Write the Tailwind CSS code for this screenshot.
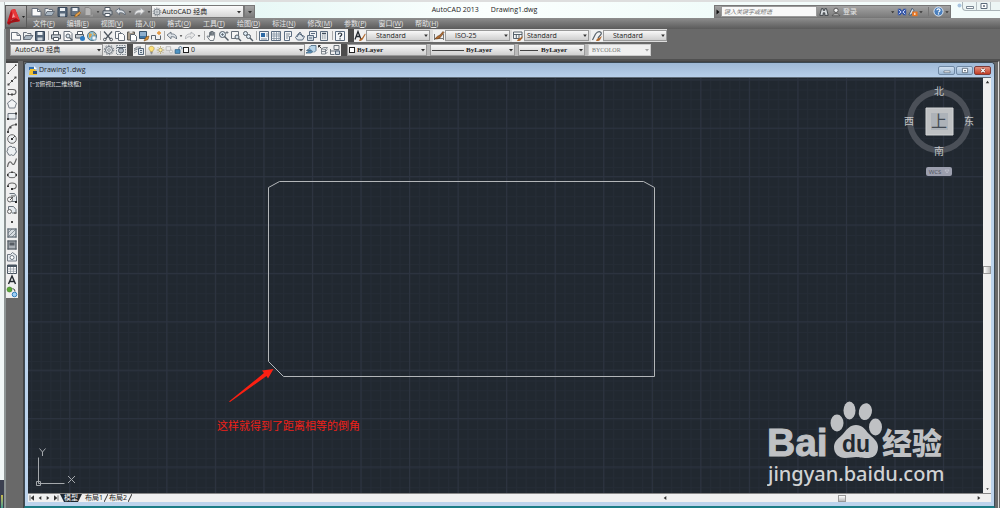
<!DOCTYPE html>
<html lang="zh-CN">
<head>
<meta charset="utf-8">
<title>AutoCAD 2013 Drawing1.dwg</title>
<script src="https://cdn.jsdelivr.net/npm/@tailwindcss/browser@4"></script>
</head>
<body class="min-h-screen flex flex-col overflow-hidden bg-[#696969] font-['Open_Sans','Noto_Sans_CJK_SC',sans-serif] text-[7px] leading-[10px] text-[#222]">

<!-- icon library, 12 x 12 grid -->
<svg class="hidden" aria-hidden="true">
  <g fill="none" stroke="#5d6670" stroke-width="1">
  <symbol id="new" viewBox="0 0 12 12"><path d="M1.500 2.500h5.500l3.500 3v4.500h-9z" fill="#fafafa" stroke="#68717c"/><path d="M7 2.500v3h3.500" fill="none" stroke="#68717c"/></symbol>
  <symbol id="open" viewBox="0 0 12 12"><path d="M1.500 9.500v-7h3l1 1h3.500v2" fill="#edf0f2" stroke="#68717c"/><path d="M1.500 9.500l2-4h7.500l-2.500 4z" fill="#a9b6c2" stroke="#68717c"/></symbol>
  <symbol id="save" viewBox="0 0 12 12"><path d="M1.500 1.500h9v9h-9z" fill="#566779" stroke="#39485a"/><path d="M3.500 2h5v3h-5z" fill="#eef2f5"/><path d="M3.500 7.500h5v3h-5z" fill="#cbd3da"/></symbol>
  <symbol id="saveas" viewBox="0 0 12 12"><path d="M1.500 1.500h8v8h-8z" fill="#6a7785" stroke="#465564"/><path d="M3 2h5v3h-5z" fill="#eef2f5"/><path d="M5 11l1-2.500 4-3 1.300 1.500-4 3.500z" fill="#e8a24a" stroke="#8a5a20" stroke-width=".6"/></symbol>
  <symbol id="cloud" viewBox="0 0 12 12"><path d="M2.500 1.500h4l2 2v6h-6z" fill="#b7b7b7" stroke="#888"/><path d="M7 10l3.500-2v2.500h-3.500z" fill="#999"/></symbol>
  <symbol id="print" viewBox="0 0 12 12"><path d="M3.500 5v-3.500h5v3.500" fill="#fff" stroke="#4f5862"/><path d="M1.500 4.800h9v4h-9z" fill="#c3c9cf" stroke="#4f5862"/><path d="M3.500 7.500h5v3h-5z" fill="#fff" stroke="#4f5862"/></symbol>
  <symbol id="preview" viewBox="0 0 12 12"><path d="M2 1.500h6l2 2v7h-8z" fill="#fafafa" stroke="#68717c"/><circle cx="6" cy="6" r="2" fill="#dde8f0" stroke="#56606a"/><path d="M7.500 7.500l3 3" stroke="#56606a" stroke-width="1.400"/></symbol>
  <symbol id="publish" viewBox="0 0 12 12"><path d="M3.500 4v-2.500h5v3" fill="#fff" stroke="#4f5862"/><path d="M1.500 4.500h8v3.500h-8z" fill="#c3c9cf" stroke="#4f5862"/><circle cx="8.500" cy="8.500" r="2.500" fill="#2c7cc4"/></symbol>
  <symbol id="globe" viewBox="0 0 12 12"><circle cx="6" cy="6" r="4.500" fill="#8ec6dd" stroke="#56717f"/><path d="M3 3l3 1-1 3-2 1zM7 2l3 3-2 1z" fill="#d9a04c"/><path d="M6 6h4v4h-4z" fill="#f4f7f9" stroke="#4a84a8" stroke-width=".7"/></symbol>
  <symbol id="cut" viewBox="0 0 12 12"><path d="M2 1.500l6.500 7.500M10 1.500l-6.500 7.500" stroke="#4c545d" stroke-width="1.200"/><circle cx="2.800" cy="9.500" r="1.300" fill="none" stroke="#4c545d"/><circle cx="9.200" cy="9.500" r="1.300" fill="none" stroke="#4c545d"/></symbol>
  <symbol id="copy" viewBox="0 0 12 12"><path d="M1.500 1.500h4l2 2v5h-6z" fill="#fafafa" stroke="#68717c"/><path d="M4.500 3.500h4l2 2v5h-6z" fill="#fafafa" stroke="#68717c"/></symbol>
  <symbol id="paste" viewBox="0 0 12 12"><path d="M1.500 2h7v8h-7z" fill="#a69a8a" stroke="#5c5953"/><path d="M3.500 1h3v2h-3z" fill="#ddd"/><path d="M4.500 4.500h4l2 2v4.500h-6z" fill="#fff" stroke="#5c656e"/></symbol>
  <symbol id="match" viewBox="0 0 12 12"><path d="M1.500 1.500h7v7h-7z" fill="#3d73a5" stroke="#39536c"/><path d="M2 3h6M2 5h6" stroke="#dce9f5"/><path d="M6 11l2-4 3-1-1 3.500z" fill="#d7933b" stroke="#7b4a14" stroke-width=".6"/></symbol>
  <symbol id="block" viewBox="0 0 12 12"><path d="M1.500 9.500v-4h4v4h5v-4" fill="none" stroke="#5a636d"/><path d="M9 1v4M7 3h4" stroke="#e29338" stroke-width="1.300"/></symbol>
  <symbol id="undo" viewBox="0 0 12 12"><path d="M1 5l4-3v2c4-.5 6 2 5.500 5-1.500-2-3-2.500-5.500-2.200v2z" fill="#dce1e6" stroke="#596572" stroke-width=".8"/></symbol>
  <symbol id="redo" viewBox="0 0 12 12"><path d="M11 5l-4-3v2c-4-.5-6 2-5.500 5 1.500-2 3-2.500 5.500-2.200v2z" fill="#e8e8e8" stroke="#a9adb2" stroke-width=".8"/></symbol>
  <symbol id="down" viewBox="0 0 6 12"><path d="M1 5h4l-2 2.500z" fill="#333"/></symbol>
  <symbol id="pan" viewBox="0 0 12 12"><path d="M4 10.500l-3-4 1-.7 1.500 1.200v-4.500h1.200v3v-4h1.200v4v-4h1.200v4l.4-3h1.200l-.2 5-1 3z" fill="#f6f6f6" stroke="#535d67" stroke-width=".8"/></symbol>
  <symbol id="zoomrt" viewBox="0 0 12 12"><circle cx="4.500" cy="4.500" r="3" fill="#dde9f2" stroke="#535d67"/><path d="M6.500 6.500l4 4" stroke="#535d67" stroke-width="1.500"/><path d="M3 4.500h3M4.500 3v3M9 1v3M7.500 2.500h3" stroke="#535d67" stroke-width=".7"/></symbol>
  <symbol id="zoomwin" viewBox="0 0 12 12"><path d="M1.500 1.500h7v7h-7z" stroke="#68717c" fill="#f5f5f5"/><circle cx="7" cy="7" r="2" fill="#dde9f2" stroke="#535d67"/><path d="M8.500 8.500l2.500 2.500" stroke="#535d67" stroke-width="1.400"/></symbol>
  <symbol id="zoomprev" viewBox="0 0 12 12"><circle cx="3.500" cy="3.500" r="2" fill="#dde9f2" stroke="#535d67"/><circle cx="6.500" cy="6.500" r="2" fill="#dde9f2" stroke="#535d67"/><path d="M8 8l3 3" stroke="#535d67" stroke-width="1.400"/></symbol>
  <symbol id="props" viewBox="0 0 12 12"><path d="M1.500 1.500h9v9h-9z" fill="#f3f6f9" stroke="#5b6c80"/><path d="M3 3h4v4h-4z" fill="#2d6aa5"/><path d="M3 9h6M8 4h2M8 6h2" stroke="#7c8894"/></symbol>
  <symbol id="grid" viewBox="0 0 12 12"><path d="M1.500 1.500h9v9h-9z" fill="#f3f6f9" stroke="#5b6c80"/><path d="M1.500 4h9M1.500 6h9M1.500 8.500h9M4 2v8M6.500 2v8M9 2v8" stroke="#8090a0" stroke-width=".8"/></symbol>
  <symbol id="palette" viewBox="0 0 12 12"><path d="M2.500 1.500h7v5h-2v4h-5z" fill="#f1f3f5" stroke="#5b6c80"/><path d="M4 4h4M4 6h3M4 8h2" stroke="#7e8a96"/></symbol>
  <symbol id="sheet" viewBox="0 0 12 12"><path d="M1.500 7.500l3-4 6 3-2 3.500h-5z" fill="#dfe5ea" stroke="#5b6c80"/><path d="M3 7l3-5 3 5" stroke="#5b6c80" fill="none"/></symbol>
  <symbol id="markup" viewBox="0 0 12 12"><path d="M3.500 1.500h7v6h-7z" fill="#f1f3f5" stroke="#5b6c80"/><path d="M1.500 5.500h6v5h-6z" fill="#cfd8df" stroke="#5b6c80"/><path d="M3 8h3M5 3.500h4" stroke="#5b6c80"/></symbol>
  <symbol id="calc" viewBox="0 0 12 12"><path d="M2.500 1.500h7v9h-7z" fill="#e8ecef" stroke="#5b6c80"/><path d="M4 3.500h4" stroke="#3d4c5c" stroke-width="1.400"/><path d="M4 6h4M4 8h4" stroke="#7e8a96" stroke-dasharray="1 .7"/></symbol>
  <symbol id="help" viewBox="0 0 12 12"><path d="M1.500 1.500h9v9h-9z" fill="#f3f6f9" stroke="#5b6c80"/><path d="M4.300 4.500c0-2 3.400-2 3.400 0 0 1.300-1.700 1.200-1.700 2.700M6 8.300v1.200" stroke="#2a333d" stroke-width="1.200" fill="none"/></symbol>
  <symbol id="gear" viewBox="0 0 12 12"><circle cx="6" cy="6" r="3.500" fill="#e3e6e9" stroke="#68717a"/><circle cx="6" cy="6" r="1.300" fill="#fff" stroke="#68717a" stroke-width=".8"/><circle cx="6" cy="6" r="4.700" fill="none" stroke="#68717a" stroke-width="1" stroke-dasharray="1.400 1.550"/></symbol>
  <symbol id="gearset" viewBox="0 0 12 12"><path d="M1.500 1.500h9v9h-9z" fill="#e6eaed" stroke="#7c868f" stroke-dasharray="1.500 1"/><circle cx="6" cy="6.500" r="2.500" fill="#aeb8c2" stroke="#56606b"/><path d="M2 3.500h8" stroke="#56606b"/></symbol>
  <symbol id="layers" viewBox="0 0 12 12"><path d="M1 5l3-2h4l-3 2zM1 7l3-2M1 9l3-2" fill="#eef1f4" stroke="#68717a" stroke-width=".8"/><path d="M5.500 4.500h5v6h-5z" fill="#dce3e9" stroke="#56677a"/><path d="M7 6.500h2M7 8.500h2" stroke="#56677a"/></symbol>
  <symbol id="bulb" viewBox="0 0 12 12"><path d="M4.500 8c0-1.500-2-2-2-4 0-4 7-4 7 0 0 2-2 2.500-2 4z" fill="#ffe27a" stroke="#a38a3b" stroke-width=".8"/><path d="M4.500 9.500h3M5 11h2" stroke="#666"/></symbol>
  <symbol id="sun" viewBox="0 0 12 12"><circle cx="6" cy="6" r="2.400" fill="#fff0a5" stroke="#927c38" stroke-width=".8"/><path d="M6 1v1.500M6 9.500v1.500M1 6h1.500M9.500 6h1.500M2.500 2.500l1 1M8.500 8.500l1 1M9.500 2.500l-1 1M3.500 8.500l-1 1" stroke="#a18a3a" stroke-width="1"/></symbol>
  <symbol id="vpf" viewBox="0 0 12 12"><path d="M1.500 1.500h6v5h-6z" fill="#ececec" stroke="#b0b0b0"/><circle cx="8" cy="8" r="2" fill="#eee" stroke="#b0b0b0"/></symbol>
  <symbol id="lock" viewBox="0 0 12 12"><path d="M6.500 5.500v-2c0-2.800 4-2.800 4 0v1.500" stroke="#426a8b" stroke-width="1.200" fill="none"/><path d="M1.500 5.500h6.500v5h-6.500z" fill="#4d95c5" stroke="#2c5c80"/></symbol>
  <symbol id="layprev" viewBox="0 0 12 12"><path d="M1 9l3-2h5l-3 2zM1.500 6.500l3-2h5l-3 2z" fill="#63a1cf" stroke="#42627b" stroke-width=".8"/><path d="M4 3.500l2-2h5v5l-2 2" fill="#b8d5e9" stroke="#42627b" stroke-width=".8"/></symbol>
  <symbol id="laystate" viewBox="0 0 12 12"><path d="M1.500 1.500l3 3M1.500 1.500h2M1.500 1.500v2" fill="none" stroke="#333"/><path d="M4.500 5l2-1.500h4l-1.500 2zM4.500 7.500h4l2-2M4.500 10h4l2-2M4.500 5v5M8.500 5.500v4.500" fill="#e6eaed" stroke="#68717a" stroke-width=".8"/></symbol>
  <symbol id="dots" viewBox="0 0 12 12"><path d="M5 1.500h5v4h-5z" fill="#eee" stroke="#68717a"/><path d="M1.500 7h9M1.500 5v5.500h4" fill="none" stroke="#68717a"/><path d="M6.500 7h4v3.500h-4z" fill="#ccd5dd" stroke="#56677a"/></symbol>
  <symbol id="textstyle" viewBox="0 0 12 12"><path d="M1 9.500l3-8 3 8M2 6.500h4" stroke="#23282e" stroke-width="1.300" fill="none"/><path d="M5 11c1-3 2-3 3-3l3-4.500.7.700-2.700 4.800c-1 1.500-2 2-4 2z" fill="#b06a30"/></symbol>
  <symbol id="dimstyle" viewBox="0 0 12 12"><path d="M1.500 4v6M1 8.500h10M10.500 4v6" stroke="#777" fill="none"/><path d="M2 9c2-3 3-3 5-4l3-3.500 1 1-3 4c-1 2-3 2.500-6 2.500z" fill="#b06a30" stroke="#5f3c1f" stroke-width=".6"/></symbol>
  <symbol id="tablestyle" viewBox="0 0 12 12"><path d="M1.500 2h8.500v6.500h-8.500zM1.500 4.500h8.500M4.300 4.500v4M7 4.500v4" fill="#f5f7f8" stroke="#47535f" stroke-width=".9"/><path d="M5 11c1-2.500 2-2.500 3-3l3-2-2 4c-1 1-2 1.300-4 1z" fill="#b06a30"/></symbol>
  <symbol id="leader" viewBox="0 0 12 12"><path d="M1.500 10l3-6c3-4 7-2 5.500.5l-3 3.500" stroke="#58626c" fill="none" stroke-width="1.200"/><path d="M5 11c1-3 2-3 3-3l3-2-2 4c-1 1-2 1.300-4 1z" fill="#b06a30"/></symbol>
  <symbol id="line" viewBox="0 0 12 12"><path d="M2.500 9.500l7-7" stroke="#777" fill="none"/><path d="M1.500 9.500h1.500v1.500h-1.500zM9 1.500h1.500v1.500h-1.500z" fill="#333"/></symbol>
  <symbol id="xline" viewBox="0 0 12 12"><path d="M2 10l8-8" stroke="#777" fill="none"/><path d="M1.500 8.500h2v2h-2zM5 5h2v2h-2zM8.500 1.500h2v2h-2z" fill="#444"/></symbol>
  <symbol id="pline" viewBox="0 0 12 12"><path d="M2 3.500h5c4 0 4 5 0 5h-5" stroke="#666" fill="none" stroke-width="1.200"/><path d="M1 8l2-1.500v3zM5 7.500h2v2h-2z" fill="#444"/></symbol>
  <symbol id="polygon" viewBox="0 0 12 12"><path d="M6 1.500l4.500 3.500-1.700 5h-5.600l-1.700-5z" stroke="#777f88" fill="#f1f3f5"/></symbol>
  <symbol id="rect" viewBox="0 0 12 12"><path d="M2 3.500h8v5.500h-8z" stroke="#6b737c" fill="#e9edf0"/><path d="M1 8h2v2h-2zM9 2.500h2v2h-2z" fill="#333"/></symbol>
  <symbol id="arc" viewBox="0 0 12 12"><path d="M2 10c0-4 3-7 8-7.500" stroke="#666" fill="none" stroke-width="1.200"/><path d="M1 9h2v2h-2zM3.500 4.500h2v2h-2zM9 1.500h2v2h-2z" fill="#444"/></symbol>
  <symbol id="circle" viewBox="0 0 12 12"><circle cx="6" cy="6" r="4.300" fill="#edf0f2" stroke="#666"/><path d="M6 6l3-3" stroke="#555"/><path d="M5 5h2v2h-2z" fill="#333"/></symbol>
  <symbol id="revcloud" viewBox="0 0 12 12"><path d="M3 2c1-1 3-1 3.500.5 2-1 4 .5 3 2.500 1.500 1 1 3-.5 3.500 0 2-2.500 2.500-3.500 1.200-1.500 1.300-4 .3-3.500-1.700-1.500-.7-1.300-2.700 0-3-.7-1-.2-2.500 1-3z" stroke="#69727b" fill="#edf0f2"/></symbol>
  <symbol id="spline" viewBox="0 0 12 12"><path d="M1.500 10c1-6 3-6 4.500-3.500s3 0 4.500-5" stroke="#666" fill="none" stroke-width="1.200"/></symbol>
  <symbol id="ellipse" viewBox="0 0 12 12"><ellipse cx="6" cy="6" rx="4.300" ry="2.700" fill="#edf0f2" stroke="#666"/><path d="M1 5h1.500v2h-1.500zM9.500 5h1.500v2h-1.500zM5.200 2.500h1.600v1.500h-1.600z" fill="#333"/></symbol>
  <symbol id="earc" viewBox="0 0 12 12"><path d="M2 6c0-4 8-4 8.300 0 0 2-2 3-4.300 3" stroke="#666" fill="none" stroke-width="1.100"/><path d="M1 5.500h2v1.500h-2zM5 8h2v2h-2z" fill="#333"/></symbol>
  <symbol id="insert" viewBox="0 0 12 12"><path d="M3.500 1.500h5l2 3v5h-5" stroke="#69727b" fill="#e4e9ed"/><circle cx="4" cy="7.500" r="2.500" fill="#f4f4f4" stroke="#666"/><path d="M9 9h2v2h-2z" fill="#222"/><path d="M5 4h4M4 8l3-3" stroke="#555"/></symbol>
  <symbol id="make" viewBox="0 0 12 12"><path d="M2.500 7v-4.500h5l2.500 3v3.500h-4" stroke="#69727b" fill="#e4e9ed"/><circle cx="3.500" cy="7.500" r="2" fill="#f4f4f4" stroke="#666"/><path d="M8 8h2.500v2h-2.500z" fill="#777"/></symbol>
  <symbol id="point" viewBox="0 0 12 12"><path d="M5 5h2v2h-2z" fill="#444"/></symbol>
  <symbol id="hatch" viewBox="0 0 12 12"><path d="M2 2h8v8h-8z" stroke="#69727b" fill="#d8dde1"/><path d="M2 6l4-4M2 10l8-8M6 10l4-4M1 2h10M1 10h10M2 1v10M10 1v10" stroke="#69727b" stroke-width=".7"/></symbol>
  <symbol id="gradient" viewBox="0 0 12 12"><path d="M2 2h8v8h-8z" stroke="#59626b" fill="#aab0b6"/><path d="M3.500 3.500h5v3h-5z" fill="#565d64"/><path d="M1 2h10M1 10h10M2 1v10M10 1v10" stroke="#59626b" stroke-width=".7"/></symbol>
  <symbol id="region" viewBox="0 0 12 12"><path d="M1.500 3.500h3l2-2 4 3v5.500h-9z" stroke="#707983" fill="#e4e9ed"/><circle cx="6" cy="6.500" r="2" fill="#fff" stroke="#707983"/></symbol>
  <symbol id="table" viewBox="0 0 12 12"><path d="M1.500 2h9v8.500h-9z" stroke="#47535f" fill="#fafafa"/><path d="M1.500 3h9" stroke="#47535f" stroke-width="2"/><path d="M1.500 6h9M1.500 8.300h9M4.500 4v6.500M7.500 4v6.500" stroke="#8a949e" stroke-width=".7"/></symbol>
  <symbol id="mtext" viewBox="0 0 12 12"><path d="M2.500 10l3.500-8 3.500 8M4 7.500h4" stroke="#23282e" stroke-width="1.400" fill="none"/></symbol>
  <symbol id="addsel" viewBox="0 0 12 12"><circle cx="3.500" cy="3.500" r="2.500" fill="#5aa838" stroke="#3c7a22" stroke-width=".6"/><circle cx="8.500" cy="8.500" r="2.300" fill="#9fd0f5" stroke="#2f7fc0"/><path d="M6.500 2.500l2 1 .5 2" stroke="#444" fill="none"/></symbol>
  <symbol id="binoc" viewBox="0 0 12 12"><path d="M3 2h2v2h2v-2h2l2 8h-4v-3h-2v3h-4z" fill="#d9dde0" stroke="#2f353b"/></symbol>
  <symbol id="user" viewBox="0 0 12 12"><circle cx="6" cy="4" r="2.600" fill="#f3f3f3" stroke="#444"/><path d="M1.500 10.500c0-3 9-3 9 0z" fill="#e4e4e4" stroke="#444"/></symbol>
  <symbol id="exchange" viewBox="0 0 12 12"><path d="M1 2h3l2 2.500 2-2.500h3v8h-3l-2-2.500-2 2.500h-3z" fill="#2d4fa3"/><path d="M2 3.500l3 2.500-3 2.500M10 3.500l-3 2.500 3 2.500" stroke="#cfdcff" fill="none" stroke-width="1.200"/></symbol>
  <symbol id="offline" viewBox="0 0 12 12"><path d="M1 9.500l4-8 2 2.500-3 5.500z" fill="#d5dde5" stroke="#37506e"/><path d="M5 5.500h6.500v5.500h-6.500z" fill="#e67522"/><path d="M8.200 7v2.500" stroke="#fff" stroke-width="1.300"/></symbol>
  <symbol id="about" viewBox="0 0 12 12"><circle cx="6" cy="6" r="5" fill="#4a7fbd" stroke="#e9f1fa"/><path d="M4.300 4.700c0-2.200 3.400-2.200 3.400 0 0 1.300-1.700 1.200-1.700 2.500M6 8v1.300" stroke="#fff" stroke-width="1.300" fill="none"/></symbol>
  <symbol id="min" viewBox="0 0 12 8"><path d="M2.500 4.500h7v2h-7z" fill="#fff" stroke="#5c6a7a" stroke-width=".8"/></symbol>
  <symbol id="max" viewBox="0 0 12 8"><path d="M3 1.500h6v5h-6z" fill="#fff" stroke="#5c6a7a"/><path d="M5 3.300h2v1.500h-2z" fill="#5c6a7a"/></symbol>
  <symbol id="close" viewBox="0 0 12 8"><path d="M4 2l4 4M8 2l-4 4" stroke="#5d2a24" stroke-width="2.600"/><path d="M4 2l4 4M8 2l-4 4" stroke="#fff" stroke-width="1.500"/></symbol>
  <symbol id="first" viewBox="0 0 12 12"><path d="M3 2v8" stroke="#333"/><path d="M9 2v8l-5-4z" fill="#333"/></symbol>
  <symbol id="prev" viewBox="0 0 12 12"><path d="M8 3v6l-4-3z" fill="#333"/></symbol>
  <symbol id="next" viewBox="0 0 12 12"><path d="M4 3v6l4-3z" fill="#333"/></symbol>
  <symbol id="last" viewBox="0 0 12 12"><path d="M9 2v8" stroke="#333"/><path d="M3 2v8l5-4z" fill="#333"/></symbol>
  <symbol id="up" viewBox="0 0 12 12"><path d="M3 8h6l-3-4z" fill="#333"/></symbol>
  </g>
</svg>

<header class="flex h-[29px] shrink-0 bg-[#f3fcfb] border-t-2 border-[#dedede]">
  <div class="w-[5px] shrink-0 bg-[#f0f7f6] border-r border-[#b5bcbc]"></div>
  <div class="flex flex-1 min-w-0 flex-col">
    <div class="flex h-4 items-end">
      <div class="relative w-[22px] h-4 shrink-0">
        <button aria-label="应用程序菜单" class="absolute left-0 top-[3px] z-10 w-[22px] h-[23px] border border-[#5a5a5a] bg-linear-to-b from-[#b8b8b8] to-[#6e6e6e]">
          <svg class="w-full h-full" viewBox="0 0 20 21"><path d="M1 17L5 4l4-1 5 12-4 1-1-3-4 1-1 4z" fill="#c8161d"/><path d="M5 4l4-1 5 12-4 1z" fill="#e8393a"/><path d="M1 17l9-5 4 3-9 2-2 2z" fill="#a01217"/><path d="M7 7l2 4-3 1z" fill="#f4a0a0"/><path d="M16 10h3l-1.500 2z" fill="#222"/></svg>
        </button>
      </div>
      <div class="flex h-[13px] w-[124px] shrink-0 items-center bg-linear-to-b from-[#a6a6a6] to-[#7c7c7c] border-t border-[#666] pl-[3px]" data-icons="new open save saveas cloud ~ print undo ~ redo ~" data-size="13"></div>
      <div class="relative flex h-[13px] w-[93px] shrink-0 items-center border border-[#777] bg-linear-to-b from-[#fbfbfb] to-[#d5d5d5]">
        <svg class="w-[10px] h-[10px] shrink-0"><use href="#gear"/></svg>
        <select aria-label="工作空间" class="appearance-none flex-1 min-w-0 h-[11px] text-[7px] leading-[10px]"><option>AutoCAD 经典</option></select>
        <svg class="absolute right-0 w-2 h-3 pointer-events-none"><use href="#down"/></svg>
      </div>
      <button aria-label="自定义快速访问工具栏" class="flex w-[11px] h-[13px] items-center justify-center bg-linear-to-b from-[#a6a6a6] to-[#7c7c7c] border border-[#777]"><svg class="w-2 h-3"><use href="#down"/></svg></button>
      <div class="flex flex-1 h-4 items-center justify-center gap-3 bg-linear-to-r from-[#e8f8f6] via-[#fbfffe] to-[#f1fcfa] min-w-0">
        <span class="whitespace-nowrap">AutoCAD 2013</span><h1 class="whitespace-nowrap">Drawing1.dwg</h1>
      </div>
      <div class="flex h-[13px] w-[237px] shrink-0 items-center bg-linear-to-b from-[#a3a3a3] to-[#7c7c7c] border border-[#777]">
        <button aria-label="展开搜索" class="w-[6px] h-[11px] flex shrink-0 items-center"><svg class="w-[6px] h-2" viewBox="0 0 6 8"><path d="M1.500 1.500v5l3-2.500z" fill="#111"/></svg></button>
        <input aria-label="搜索" placeholder="键入关键字或短语" class="w-24 shrink-0 h-[11px] px-[2px] bg-[#f8f8f8] border border-[#999] italic text-[6px] leading-[9px] placeholder:text-[#777]">
        <button aria-label="查找" class="w-[13px] shrink-0 flex justify-center"><svg class="w-[10px] h-[10px]"><use href="#binoc"/></svg></button>
        <button class="flex items-center gap-[2px] text-[#e6e6e6] w-[65px]"><svg class="w-[10px] h-[10px] ml-[1px]"><use href="#user"/></svg>登录</button>
        <svg class="w-[6px] h-[10px] mx-[1px]"><use href="#down"/></svg>
        <button aria-label="Exchange" class="px-[1px]"><svg class="w-[10px] h-[10px] block"><use href="#exchange"/></svg></button>
        <button aria-label="脱机" class="flex items-center"><svg class="w-[10px] h-[10px]"><use href="#offline"/></svg><svg class="w-[6px] h-[10px]"><use href="#down"/></svg></button>
        <span class="w-px h-[9px] bg-[#777] mx-1"></span>
        <button aria-label="帮助" class="flex items-center"><svg class="w-[11px] h-[11px]"><use href="#about"/></svg><svg class="w-[6px] h-[10px]"><use href="#down"/></svg></button>
      </div>
      <div class="flex w-[49px] shrink-0 h-4 items-start pl-[6px]">
        <svg class="w-[5px] h-[7px]" viewBox="0 0 5 7"><circle cx="2.500" cy="3.500" r="2" fill="#a8c4e0"/></svg>
        <div class="flex h-[9px] flex-1 border border-t-0 border-r-0 border-[#aab4b8] rounded-bl bg-[#edf5f5]">
          <button aria-label="最小化" class="w-[14px] border-r border-[#b5bec2]"><svg class="w-3 h-2 block mx-auto"><use href="#min"/></svg></button>
          <button aria-label="还原" class="w-[14px] border-r border-[#b5bec2]"><svg class="w-3 h-2 block mx-auto"><use href="#max"/></svg></button>
          <button aria-label="关闭" class="flex-1"></button>
        </div>
      </div>
    </div>
    <nav class="flex h-[11px] items-center gap-3 bg-linear-to-b from-[#8e8e8e] to-[#5b5b5b] pl-[28px] text-[#e6e6e6] leading-[11px] whitespace-nowrap">
      <a href="#">文件(<u>F</u>)</a><a href="#">编辑(<u>E</u>)</a><a href="#">视图(<u>V</u>)</a><a href="#">插入(<u>I</u>)</a><a href="#">格式(<u>O</u>)</a><a href="#">工具(<u>T</u>)</a><a href="#">绘图(<u>D</u>)</a><a href="#">标注(<u>N</u>)</a><a href="#">修改(<u>M</u>)</a><a href="#">参数(<u>P</u>)</a><a href="#">窗口(<u>W</u>)</a><a href="#">帮助(<u>H</u>)</a>
    </nav>
  </div>
</header>

<div class="flex flex-1 min-h-0">
  <div class="flex w-[6px] shrink-0 flex-col justify-end bg-[#f0f6f6] border-r-2 border-[#8d9494]">
    <div class="h-7 bg-[#3b4050] pt-[15px] px-[1px]"><div class="h-full bg-linear-to-b from-[#c7b84a] to-[#3a9c8c]"></div></div>
  </div>
  <main class="flex flex-1 min-w-0 flex-col">
    <!-- standard and styles toolbars -->
    <div class="flex h-[13px] items-center ml-1">
      <div class="flex h-[13px] shrink-0 items-center bg-[#f0f0f0] w-[338px]" data-icons="new open save | print preview publish globe | cut copy paste match block | undo ~ redo ~ | pan zoomrt zoomwin zoomprev | props grid palette sheet markup calc | help" data-size="12"></div>
      <span class="w-[6px] h-[13px] bg-[#4c4c4c]"></span>
      <div class="flex h-[13px] items-center bg-[#ddd]">
        <div data-icons="textstyle" data-size="12" class="flex bg-[#f0f0f0]"></div>
        <div class="relative w-16 h-[11px]"><select aria-label="文字样式" class="appearance-none block w-full h-[11px] pl-[9px] border border-[#999] bg-linear-to-b from-[#f8f8f8] to-[#cfcfcf] text-[7px] leading-[9px]"><option>Standard</option></select><svg class="absolute right-0 top-0 w-2 h-[11px] pointer-events-none"><use href="#down"/></svg></div>
        <span class="w-[3px]"></span>
        <div data-icons="dimstyle" data-size="12" class="flex bg-[#f0f0f0]"></div>
        <div class="relative w-[65px] h-[11px]"><select aria-label="标注样式" class="appearance-none block w-full h-[11px] pl-[9px] border border-[#999] bg-linear-to-b from-[#f8f8f8] to-[#cfcfcf] text-[7px] leading-[9px]"><option>ISO-25</option></select><svg class="absolute right-0 top-0 w-2 h-[11px] pointer-events-none"><use href="#down"/></svg></div>
        <span class="w-[2px]"></span>
        <div data-icons="tablestyle" data-size="12" class="flex bg-[#f0f0f0]"></div>
        <div class="relative w-[65px] h-[11px]"><select aria-label="表格样式" class="appearance-none block w-full h-[11px] pl-[2px] border border-[#999] bg-linear-to-b from-[#f8f8f8] to-[#cfcfcf] text-[7px] leading-[9px]"><option>Standard</option></select><svg class="absolute right-0 top-0 w-2 h-[11px] pointer-events-none"><use href="#down"/></svg></div>
        <span class="w-[2px]"></span>
        <div data-icons="leader" data-size="12" class="flex bg-[#f0f0f0]"></div>
        <div class="relative w-16 h-[11px]"><select aria-label="多重引线样式" class="appearance-none block w-full h-[11px] pl-[9px] border border-[#999] bg-linear-to-b from-[#f8f8f8] to-[#cfcfcf] text-[7px] leading-[9px]"><option>Standard</option></select><svg class="absolute right-0 top-0 w-2 h-[11px] pointer-events-none"><use href="#down"/></svg></div>
      </div>
    </div>
    <!-- workspace, layer and property toolbars -->
    <div class="flex h-3 items-center mt-[2px] ml-1">
      <div class="relative w-[93px] h-3"><select aria-label="工作空间" class="appearance-none block w-full h-3 pl-1 border border-[#999] bg-linear-to-b from-[#f8f8f8] to-[#cfcfcf] text-[7px] leading-[10px]"><option>AutoCAD 经典</option></select><svg class="absolute right-0 top-0 w-2 h-3 pointer-events-none"><use href="#down"/></svg></div>
      <div class="flex bg-[#e4e4e4] h-3" data-icons="gear gearset" data-size="12"></div>
      <span class="w-[6px] h-3 bg-[#4c4c4c]"></span>
      <div class="flex bg-[#f0f0f0] h-3" data-icons="layers" data-size="12"></div>
      <div class="relative w-40 h-3">
        <select aria-label="图层" class="appearance-none block w-full h-3 pl-[45px] border border-[#999] bg-linear-to-b from-[#f8f8f8] to-[#cfcfcf] text-[7px] leading-[10px]"><option>0</option></select>
        <div class="absolute left-[2px] top-[1px] flex pointer-events-none"><svg class="w-[9px] h-[10px]"><use href="#bulb"/></svg><svg class="w-[9px] h-[10px]"><use href="#sun"/></svg><svg class="w-[9px] h-[10px]"><use href="#vpf"/></svg><svg class="w-[9px] h-[10px]"><use href="#lock"/></svg><span class="w-[6px] h-[6px] mt-[2px] bg-white border border-[#222]"></span></div>
        <svg class="absolute right-0 top-0 w-2 h-3 pointer-events-none"><use href="#down"/></svg>
      </div>
      <div class="flex bg-[#f0f0f0] h-3" data-icons="layprev laystate dots" data-size="12"></div>
      <span class="w-[6px] h-3 bg-[#4c4c4c]"></span>
      <div class="flex h-3 gap-[3px] bg-[#bbb] font-['Liberation_Serif',serif] font-bold">
        <div class="relative w-20 h-3"><select aria-label="颜色" class="appearance-none block w-full h-3 pl-[9px] border border-[#999] bg-linear-to-b from-[#f8f8f8] to-[#cfcfcf] text-[7px] leading-[10px]"><option>ByLayer</option></select><span class="absolute left-[2px] top-[3px] w-[6px] h-[6px] bg-white border border-[#222]"></span><svg class="absolute right-0 top-0 w-2 h-3 pointer-events-none"><use href="#down"/></svg></div>
        <div class="relative w-[85px] h-3"><select aria-label="线型" class="appearance-none block w-full h-3 pl-[35px] border border-[#999] bg-linear-to-b from-[#f8f8f8] to-[#cfcfcf] text-[7px] leading-[10px]"><option>ByLayer</option></select><span class="absolute left-[2px] top-[6px] w-8 h-px bg-[#444]"></span><svg class="absolute right-0 top-0 w-2 h-3 pointer-events-none"><use href="#down"/></svg></div>
        <div class="relative w-[67px] h-3"><select aria-label="线宽" class="appearance-none block w-full h-3 pl-[22px] border border-[#999] bg-linear-to-b from-[#f8f8f8] to-[#cfcfcf] text-[7px] leading-[10px]"><option>ByLayer</option></select><span class="absolute left-[2px] top-[6px] w-[18px] h-px bg-[#444]"></span><svg class="absolute right-0 top-0 w-2 h-3 pointer-events-none"><use href="#down"/></svg></div>
        <div class="relative w-[63px] h-3"><select disabled aria-label="打印样式" class="appearance-none block w-full h-3 pl-[3px] border border-[#ccc] bg-[#f0f0f0] font-normal text-[#777] opacity-100 text-[6px] leading-[10px]"><option>BYCOLOR</option></select><svg class="absolute right-0 top-0 w-2 h-3 pointer-events-none opacity-40"><use href="#down"/></svg></div>
      </div>
    </div>

    <div class="flex flex-1 min-h-0 mt-[3px] border-t-2 border-[#505050]">
      <aside class="w-3 shrink-0 bg-[#696969]">
        <div class="h-[2px] bg-[#444]"></div>
        <div class="flex h-[235px] flex-col bg-[#efefef] overflow-hidden *:min-h-0 *:flex-1" data-icons="line xline pline polygon rect arc circle revcloud spline ellipse earc insert make point hatch gradient region table mtext addsel" data-size="12"></div>
      </aside>
      <div class="flex flex-1 min-w-0 ml-[5px] border-l border-t border-[#444] mr-[1px] border-r-[#ddd] border-r">
        <section class="flex flex-1 min-w-0 flex-col rounded-t border border-b-2 border-[#3c4a55] border-b-[#1b7c86] bg-[#bcd3ec] mr-[3px] px-[3px] pb-1">
          <div class="flex h-[14px] shrink-0 items-center bg-linear-to-b from-[#9fb9d6] to-[#b7cfea] -mx-[3px] px-[3px] rounded-t">
            <svg class="w-[9px] h-[9px] mx-[1px]" viewBox="0 0 9 9"><path d="M0 1h5l1 3h-6z" fill="#2f6db0"/><path d="M1 3h4l3 2v4h-8z" fill="#f0c02c"/><path d="M5 0l3 3h-3z" fill="#fff"/><path d="M4 5h4v3h-4z" fill="#2b4c7e"/></svg>
            <h2 class="flex-1 leading-[14px]">Drawing1.dwg</h2>
            <div class="flex gap-[1px]">
              <button aria-label="最小化图形" class="w-[17px] h-[9px] rounded-xs border border-[#7089a5] bg-linear-to-b from-[#cfdff0] to-[#9db8d5]"><svg class="block mx-auto w-3 h-[7px]"><use href="#min"/></svg></button>
              <button aria-label="最大化图形" class="w-[17px] h-[9px] rounded-xs border border-[#7089a5] bg-linear-to-b from-[#cfdff0] to-[#9db8d5]"><svg class="block mx-auto w-3 h-[7px]"><use href="#max"/></svg></button>
              <button aria-label="关闭图形" class="w-[17px] h-[9px] rounded-xs border border-[#7c3a38] bg-linear-to-b from-[#e09080] to-[#c23a22]"><svg class="block mx-auto w-3 h-[7px]"><use href="#close"/></svg></button>
            </div>
          </div>
          <div class="flex flex-1 min-h-0 border-t border-[#5f6b78]">
            <!-- drawing canvas -->
            <div class="relative flex-1 min-w-0 bg-[#212830] overflow-hidden">
              <svg class="absolute inset-0 w-full h-full" role="img" aria-label="倒角矩形图形">
                <defs>
                  <pattern id="minor" width="9.700" height="9.700" x="41.700" y="1.800" patternUnits="userSpaceOnUse"><path d="M.5 0v9.700M0 .5h9.700" stroke="#252c36" stroke-width="1"/></pattern>
                  <pattern id="major" width="48.550" height="48.400" x="41.200" y="1.300" patternUnits="userSpaceOnUse"><path d="M.5 0v48.500M0 .5h48.600" stroke="#2d3441" stroke-width="1"/></pattern>
                </defs>
                <rect width="100%" height="100%" fill="url(#minor)"/>
                <rect width="100%" height="100%" fill="url(#major)"/>
                <path d="M240.500 109.500L251.500 103.500H615.500L626.500 109.500V298.500H255.500L240.500 283.500Z" fill="none" stroke="#b3b6b9"/>
                <path d="M201 323.500L236 295l-2-2.500 11.500-1.500-5.500 9.500-1.500-2.500-36.500 26z" fill="#fb2012"/>
                <g fill="none" stroke="#a4a8ac"><path d="M10.500 379.500v26h26M8.500 403.500h4v4h-4z"/><path d="M40 398l7 7M47 398l-7 7M11.500 370.500l3 3.500 3-3.500M14.500 374v4"/></g>
              </svg>
              <p class="absolute left-[2px] top-[2px] text-[6px] leading-[9px] text-[#e2e4e6]">[−][俯视][二维线框]</p>
              <p class="absolute left-[189px] top-[340px] text-[11px] leading-4 text-[#ee2018] whitespace-nowrap">这样就得到了距离相等的倒角</p>
              <!-- view cube -->
              <svg class="absolute right-[8px] top-[6px] w-[72px] h-[96px]" viewBox="0 0 72 96" font-family="Noto Sans CJK SC, sans-serif" text-anchor="middle">
                <circle cx="36" cy="37" r="29" fill="none" stroke="#4b5058" stroke-width="6"/>
                <path d="M23 24h27v27h-27z" fill="#bfc1c3" stroke="#d2d4d5"/><path d="M28 29h17v17h-17z" fill="#adb2b8"/>
                <text x="36" y="43" font-size="16" fill="#444b54">上</text>
                <g font-size="10" fill="#c3c5c7"><text x="36" y="11">北</text><text x="6" y="41">西</text><text x="66" y="41">东</text><text x="36" y="71">南</text></g>
                <rect x="23" y="83" width="26" height="9" rx="2" fill="#9c9fae"/><text x="32" y="90" font-size="6" fill="#4f535d" font-family="Open Sans">WCS</text><path d="M42 86h4l-2 3z" fill="none" stroke="#c8cad4" stroke-width=".6"/>
              </svg>
              <!-- watermark -->
              <svg class="absolute right-[30px] bottom-[3px] w-[186px] h-[90px]" viewBox="0 0 186 90" fill="#bfc1c4">
                <text x="0" y="56" font-family="Liberation Sans" font-weight="700" font-size="39" stroke="#bfc1c4">Bai</text>
                <ellipse cx="70" cy="23" rx="6.500" ry="8.500"/><ellipse cx="82.500" cy="10.500" rx="6" ry="9"/><ellipse cx="98.500" cy="11.500" rx="6.500" ry="8.500" transform="rotate(12 98 11)"/><ellipse cx="108.500" cy="27" rx="6.500" ry="8.500"/>
                <path d="M89 25c6 0 9 4 12 8 5 5 10 8 10 14 0 9-6 11-11 11-6 0-8-1-11-1s-6 1-11 1c-6 0-11-4-11-11 0-6 5-9 9-13 4-5 7-9 13-9z"/>
                <text x="75" y="52" font-family="Liberation Sans" font-weight="700" font-size="23" fill="#212830">du</text>
                <text x="115" y="54" font-family="Noto Sans CJK SC" font-weight="900" font-size="30">经验</text>
                <text x="1" y="81" font-family="Noto Sans, Open Sans" font-weight="500" font-size="20" fill="#d0d2d4">jingyan.baidu.com</text>
              </svg>
            </div>
            <div class="flex w-2 shrink-0 flex-col items-center justify-between bg-[#f0f0f0]">
              <button aria-label="向上滚动" class="h-2"><svg class="w-[7px] h-2"><use href="#up"/></svg></button>
              <span class="w-2 h-2 mb-8 border border-[#999] bg-linear-to-r from-white to-[#bbb]"></span>
              <button aria-label="向下滚动" class="h-2"><svg class="w-[7px] h-2"><use href="#down"/></svg></button>
            </div>
          </div>
          <div class="flex h-[9px] shrink-0 items-center bg-[#f0f0f0] border-t border-[#888] leading-[8px]">
            <div class="flex w-8" data-icons="first prev next last" data-size="8"></div>
            <button class="relative h-2 w-[22px] text-white"><svg class="absolute inset-0 w-full h-full" viewBox="0 0 22 8"><path d="M0 0h22l-4 8h-14z" fill="#212830"/></svg><span class="relative">模型</span></button>
            <button class="h-2 pl-[3px]">布局1</button><svg class="w-1 h-2 mx-[1px]" viewBox="0 0 4 8"><path d="M0 8l4-8" stroke="#333"/></svg>
            <button class="h-2">布局2</button><svg class="w-1 h-2 mx-[1px]" viewBox="0 0 4 8"><path d="M0 8l4-8" stroke="#333"/></svg>
            <div class="ml-auto flex w-[330px] items-center justify-between pr-2">
              <svg class="w-2 h-2"><use href="#prev"/></svg>
              <span class="w-2 h-[7px] ml-10 border border-[#999] bg-linear-to-b from-white to-[#bbb]"></span>
              <svg class="w-2 h-2"><use href="#next"/></svg>
            </div>
          </div>
        </section>
      </div>
    </div>
  </main>
</div>

<script>
// Fill each toolbar: "|" is a separator, "~" a small drop-down arrow.
const widths = { 8: 'w-2 h-2', 12: 'w-3 h-3', 13: 'w-[13px] h-3' };
document.querySelectorAll('[data-icons]').forEach(bar => {
  const size = bar.dataset.size;
  bar.innerHTML = bar.dataset.icons.split(' ').map(name => {
    if (name === '|') return '<span class="w-px h-[9px] bg-[#aaa] ml-[2px] mr-[1px] shrink-0"></span>';
    if (name === '~') return '<button aria-label="更多" class="shrink-0"><svg class="w-[6px] h-3 block p-[1px]"><use href="#down"/></svg></button>';
    return `<button aria-label="${name}" class="flex items-center justify-center"><svg class="${widths[size]} block shrink-0"><use href="#${name}"/></svg></button>`;
  }).join('');
});
</script>
</body>
</html>
